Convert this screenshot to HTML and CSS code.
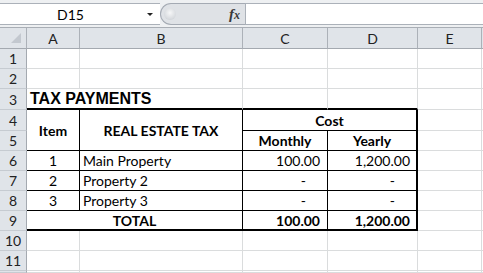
FILE: index.html
```html
<!DOCTYPE html>
<html lang="en">
<head>
    <meta charset="UTF-8">
    <title>Tax Payments</title>
    <link rel="stylesheet" href="styles.css">
</head>
<body>
    <div class="formula-bar">
        <div class="name-box">
            <span class="name">D15</span>
            <span class="drop"></span>
        </div>
        <div class="fx-area">
            <span class="grip"></span>
            <span class="fx">f<span class="fx-x">x</span></span>
        </div>
        <div class="formula-input"></div>
    </div>

    <div class="sheet">
        <!-- column headers -->
        <div class="c hd corner">
            <svg width="10" height="10" viewBox="0 0 10 10"><path d="M10 0 L10 10 L0 10 Z" fill="#c3c8cf"/></svg>
        </div>
        <div class="c hd">A</div>
        <div class="c hd">B</div>
        <div class="c hd">C</div>
        <div class="c hd">D</div>
        <div class="c hd">E</div>
        <div class="c hd"></div>

        <!-- row 1 -->
        <div class="c rh">1</div>
        <div class="c"></div><div class="c"></div><div class="c"></div><div class="c"></div><div class="c"></div><div class="c"></div>

        <!-- row 2 -->
        <div class="c rh">2</div>
        <div class="c"></div><div class="c"></div><div class="c"></div><div class="c"></div><div class="c"></div><div class="c"></div>

        <!-- row 3 -->
        <div class="c rh">3</div>
        <div class="c span2 title tb2">TAX PAYMENTS</div>
        <div class="c tb2"></div>
        <div class="c tb2"></div>
        <div class="c"></div><div class="c"></div>

        <!-- rows 4-5 -->
        <div class="c rh">4</div>
        <div class="c t b ctr rows2">Item</div>
        <div class="c t b ctr rows2">REAL ESTATE TAX</div>
        <div class="c t b ctr span2 tr2">Cost</div>
        <div class="c"></div><div class="c"></div>

        <div class="c rh">5</div>
        <div class="c t b ctr">Monthly</div>
        <div class="c t b ctr tr2">Yearly</div>
        <div class="c"></div><div class="c"></div>

        <!-- row 6 -->
        <div class="c rh">6</div>
        <div class="c t ctr">1</div>
        <div class="c t">Main Property</div>
        <div class="c t num">100.00</div>
        <div class="c t num tr2">1,200.00</div>
        <div class="c"></div><div class="c"></div>

        <!-- row 7 -->
        <div class="c rh">7</div>
        <div class="c t ctr">2</div>
        <div class="c t">Property 2</div>
        <div class="c t num dash">-</div>
        <div class="c t num dash tr2">-</div>
        <div class="c"></div><div class="c"></div>

        <!-- row 8 -->
        <div class="c rh">8</div>
        <div class="c t ctr">3</div>
        <div class="c t">Property 3</div>
        <div class="c t num dash">-</div>
        <div class="c t num dash tr2">-</div>
        <div class="c"></div><div class="c"></div>

        <!-- row 9 -->
        <div class="c rh">9</div>
        <div class="c t b ctr span2 tb2">TOTAL</div>
        <div class="c t b num tb2">100.00</div>
        <div class="c t b num tb2 tr2">1,200.00</div>
        <div class="c"></div><div class="c"></div>

        <!-- rows 10-12 -->
        <div class="c rh">10</div>
        <div class="c"></div><div class="c"></div><div class="c"></div><div class="c"></div><div class="c"></div><div class="c"></div>
        <div class="c rh">11</div>
        <div class="c"></div><div class="c"></div><div class="c"></div><div class="c"></div><div class="c"></div><div class="c"></div>
        <div class="c rh"></div>
        <div class="c"></div><div class="c"></div><div class="c"></div><div class="c"></div><div class="c"></div><div class="c"></div>
    </div>
</body>
</html>
```

FILE: styles.css
```css
body {
    margin: 0;
    width: 483px;
    height: 273px;
    overflow: hidden;
    background: #fff;
    font-family: Lato, 'Liberation Sans', sans-serif;
    color: #000;
}
.formula-bar {
    display: flex;
    height: 22px;
    padding: 3px 0 2px;
    background: #eef0f2;
}
.name-box {
    width: 160px;
    box-sizing: border-box;
    display: flex;
    align-items: center;
    background: #fff;
    border-top: 1px solid #abb1b9;
    border-bottom: 1px solid #abb1b9;
    font-size: 14px;
}
.name-box .name {
    flex: 1;
    text-align: center;
}
.name-box .drop {
    width: 0;
    height: 0;
    margin: 1px 7px 0 6px;
    border-left: 3px solid transparent;
    border-right: 3px solid transparent;
    border-top: 3px solid #222;
}
.fx-area {
    width: 85px;
    box-sizing: border-box;
    display: flex;
    align-items: center;
    justify-content: space-between;
    padding: 0 5px 0 3px;
    background: #dfe2e6;
    border: 1px solid #a4aab3;
    border-right: none;
    border-radius: 11px 0 0 11px;
}
.fx-area .grip {
    width: 12px;
    height: 12px;
    border-radius: 50%;
    background: radial-gradient(circle at 50% 40%, #f6f7f8 0%, #d8dbdf 65%, #c2c6cc 100%);
}
.fx-area .fx {
    font-family: 'Liberation Serif', serif;
    font-style: italic;
    font-weight: bold;
    font-size: 15px;
    color: #3a3a3a;
}
.fx-area .fx-x {
    font-size: 12px;
}
.formula-input {
    flex: 1;
    background: #fff;
    border-top: 1px solid #abb1b9;
    border-bottom: 1px solid #abb1b9;
    border-left: 1px solid #abb1b9;
}

.sheet {
    display: grid;
    grid-template-columns: 27px 53px 163px 85px 90px 64px 1fr;
    grid-template-rows: 21px 20px 20px 21px 21px 20px 20px 20px 20px 20px 20px 20px 2px;
    border-top: 1px solid #a9aeb5;
}
.c {
    box-sizing: border-box;
    display: flex;
    align-items: center;
    padding: 0 3px;
    border-right: 1px solid #dadcdd;
    border-bottom: 1px solid #dadcdd;
    font-size: 14px;
    white-space: nowrap;
    overflow: hidden;
}
.hd {
    justify-content: center;
    background: #e0e4e9;
    border-right-color: #acb1b8;
    border-bottom-color: #a4a9b0;
    color: #222;
}
.corner {
    justify-content: flex-end;
    align-items: flex-end;
    padding: 0 5px 5px 0;
}
.rh {
    justify-content: center;
    background: #e0e4e9;
    border-right-color: #a4a9b0;
    border-bottom-color: #c6cbd1;
    color: #222;
}
.span2 {
    grid-column: span 2;
}
.rows2 {
    grid-row: span 2;
}
.title {
    font-family: 'Liberation Sans', sans-serif;
    font-weight: bold;
    font-size: 16px;
}
.t {
    border-right-color: #000;
    border-bottom-color: #000;
}
.tb2 {
    border-bottom: 2px solid #000;
}
.tr2 {
    border-right: 2px solid #000;
}
.b {
    font-weight: bold;
}
.ctr {
    justify-content: center;
}
.num {
    justify-content: flex-end;
    padding-right: 7px;
}
.num.tr2 {
    padding-right: 6px;
}
.dash,
.num.dash.tr2 {
    padding-right: 21px;
}
```
